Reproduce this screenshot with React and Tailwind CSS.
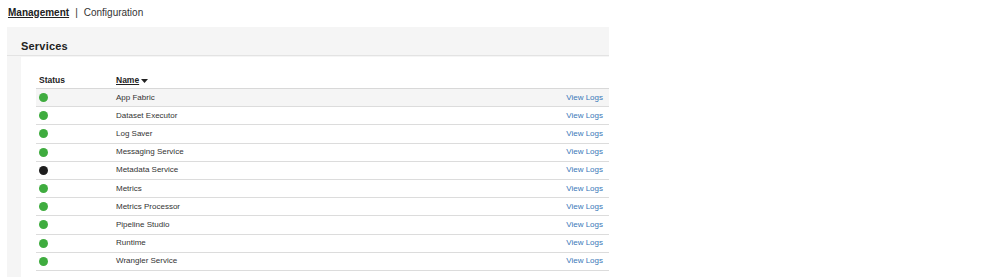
import React from "react";

const services = [
  ["App Fabric", true],
  ["Dataset Executor", true],
  ["Log Saver", true],
  ["Messaging Service", true],
  ["Metadata Service", false],
  ["Metrics", true],
  ["Metrics Processor", true],
  ["Pipeline Studio", true],
  ["Runtime", true],
  ["Wrangler Service", true],
];

export default function App() {
  return (
    <div
      className="w-[997px] h-[277px] bg-white text-[#333] overflow-hidden"
      style={{ fontFamily: '"Liberation Sans", Arial, sans-serif' }}
    >
      <div className="flex items-center h-[25px] pl-[8px] text-[10px] leading-none">
        <span className="font-bold underline text-[#222]">Management</span>
        <span className="mx-[6px] text-[#333]">|</span>
        <span className="text-[#333]">Configuration</span>
      </div>
      <div className="ml-[7px] mt-[2px] w-[602px] bg-[#f5f5f5]">
        <div className="h-[29px] flex items-end pb-[1px] pl-[14px] border-b border-[#e3e3e3]">
          <span className="text-[11px] font-bold text-[#222] tracking-[0.2px]">Services</span>
        </div>
        <div className="ml-[14px] mt-[1px] bg-white pt-[16px] pl-[15px] h-[225px]">
          <div className="flex items-center h-[16px] text-[8.5px] font-bold text-[#222] border-b border-[#d8d8d8]">
            <div className="w-[80px] pl-[3px]">Status</div>
            <div className="flex items-center">
              <span className="underline">Name</span>
              <svg width="7" height="4" viewBox="0 0 7 4" className="ml-[2px]">
                <path d="M0 0 L7 0 L3.5 4 Z" fill="#222" />
              </svg>
            </div>
          </div>
          {services.map(([name, ok], i) => (
            <div
              key={name}
              className={`flex items-center h-[18.2px] text-[8px] border-b border-[#dcdcdc] ${
                i === 0 ? "bg-[#f5f5f5]" : "bg-white"
              }`}
            >
              <div className="w-[80px] pl-[3px] flex items-center">
                <span
                  className={`block w-[9px] h-[9px] rounded-full ${
                    ok ? "bg-[#3fac3f]" : "bg-[#1e1e1e]"
                  }`}
                />
              </div>
              <div className="flex-1 text-[#333]">{name}</div>
              <div className="pr-[6px] text-[#3a78b8]">View Logs</div>
            </div>
          ))}
        </div>
      </div>
    </div>
  );
}
